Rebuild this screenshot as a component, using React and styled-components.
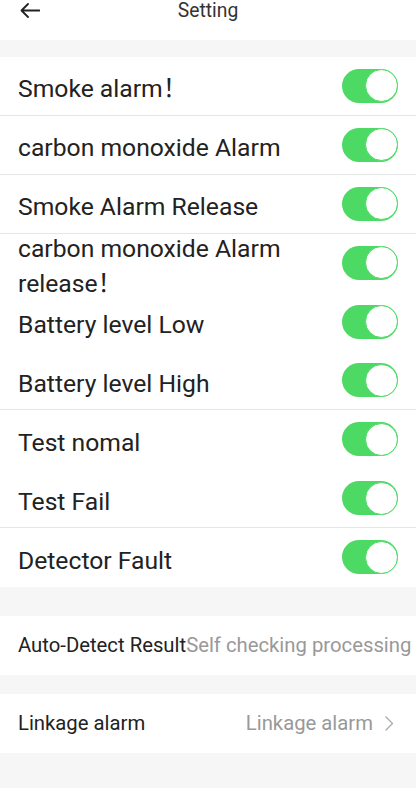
import React from "react";
import styled, { createGlobalStyle } from "styled-components";

const Global = createGlobalStyle`
  html, body { margin: 0; padding: 0; background: #f6f6f6; }
  body { font-family: Roboto, "Noto Sans CJK SC", sans-serif; -webkit-font-smoothing: antialiased; }
  * { box-sizing: border-box; }
`;

const Page = styled.div`
  width: 416px;
  min-height: 788px;
  background: #f6f6f6;
  display: flex;
  flex-direction: column;
  overflow: hidden;
`;

const Header = styled.div`
  height: 40px;
  background: #fff;
  display: flex;
  align-items: flex-start;
  justify-content: center;
  position: relative;
`;

const Title = styled.div`
  font-size: 19.3px;
  line-height: 22px;
  color: #333;
`;

const Back = styled.svg`
  position: absolute;
  left: 20px;
  top: 3px;
`;

const Section = styled.div`
  background: #fff;
  margin-top: ${(p) => p.$gap}px;
  display: flex;
  flex-direction: column;
`;

const Row = styled.div`
  height: ${(p) => p.$h || 58.9}px;
  padding: 0 18px;
  display: flex;
  align-items: center;
  justify-content: space-between;
  border-bottom: 1px solid ${(p) => (p.$divider ? "#e6e6e6" : "transparent")};
  white-space: nowrap;
`;

const Label = styled.div`
  font-size: 24.7px;
  line-height: 35px;
  color: #222;
  padding-top: 6px;
  white-space: normal;
  max-width: 300px;
`;

const SmallLabel = styled.span`
  font-size: 20.3px;
  color: #222;
`;

const Value = styled.span`
  font-size: 20.3px;
  color: #999;
`;

const Right = styled.div`
  display: flex;
  align-items: center;
  gap: 12px;
  padding-right: 4px;
`;

const Left = styled.div`
  display: flex;
  align-items: center;
`;

const Toggle = styled.div`
  width: 56px;
  height: 34px;
  border-radius: 17px;
  background: #4cd964;
  flex-shrink: 0;
  display: flex;
  justify-content: flex-end;
  align-items: center;
`;

const Knob = styled.div`
  width: 33px;
  height: 33px;
  border-radius: 50%;
  background: #fff;
  border: 1.5px solid #4cd964;
`;

const items = [
  { t: "Smoke alarm！", d: true },
  { t: "carbon monoxide Alarm", d: true },
  { t: "Smoke Alarm Release", d: true },
  { t: "carbon monoxide Alarm release！", d: false },
  { t: "Battery level Low", d: false },
  { t: "Battery level High", d: true },
  { t: "Test nomal", d: false },
  { t: "Test Fail", d: true },
  { t: "Detector Fault", d: false },
];

export default function App() {
  return (
    <>
      <Global />
      <Page>
        <Header>
          <Back width="20" height="16" viewBox="0 0 20 16">
            <path d="M1.5 7.5H19.5M8 1L1.5 7.5L8 14" fill="none" stroke="#222" strokeWidth="1.8" strokeLinecap="round" strokeLinejoin="round" />
          </Back>
          <Title>Setting</Title>
        </Header>
        <Section $gap={17}>
          {items.map((it) => (
            <Row key={it.t} $divider={it.d}>
              <Label>{it.t}</Label>
              <Toggle>
                <Knob />
              </Toggle>
            </Row>
          ))}
        </Section>
        <Section $gap={29}>
          <Row $h={59}>
            <Left>
              <SmallLabel>Auto-Detect Result</SmallLabel>
              <Value>Self checking processing</Value>
            </Left>
          </Row>
        </Section>
        <Section $gap={19}>
          <Row $h={59}>
            <SmallLabel>Linkage alarm</SmallLabel>
            <Right>
              <Value>Linkage alarm</Value>
              <svg width="9" height="15" viewBox="0 0 9 15">
                <path d="M1 1L7.5 7.5L1 14" fill="none" stroke="#aaa" strokeWidth="1.3" strokeLinecap="round" strokeLinejoin="round" />
              </svg>
            </Right>
          </Row>
        </Section>
      </Page>
    </>
  );
}
